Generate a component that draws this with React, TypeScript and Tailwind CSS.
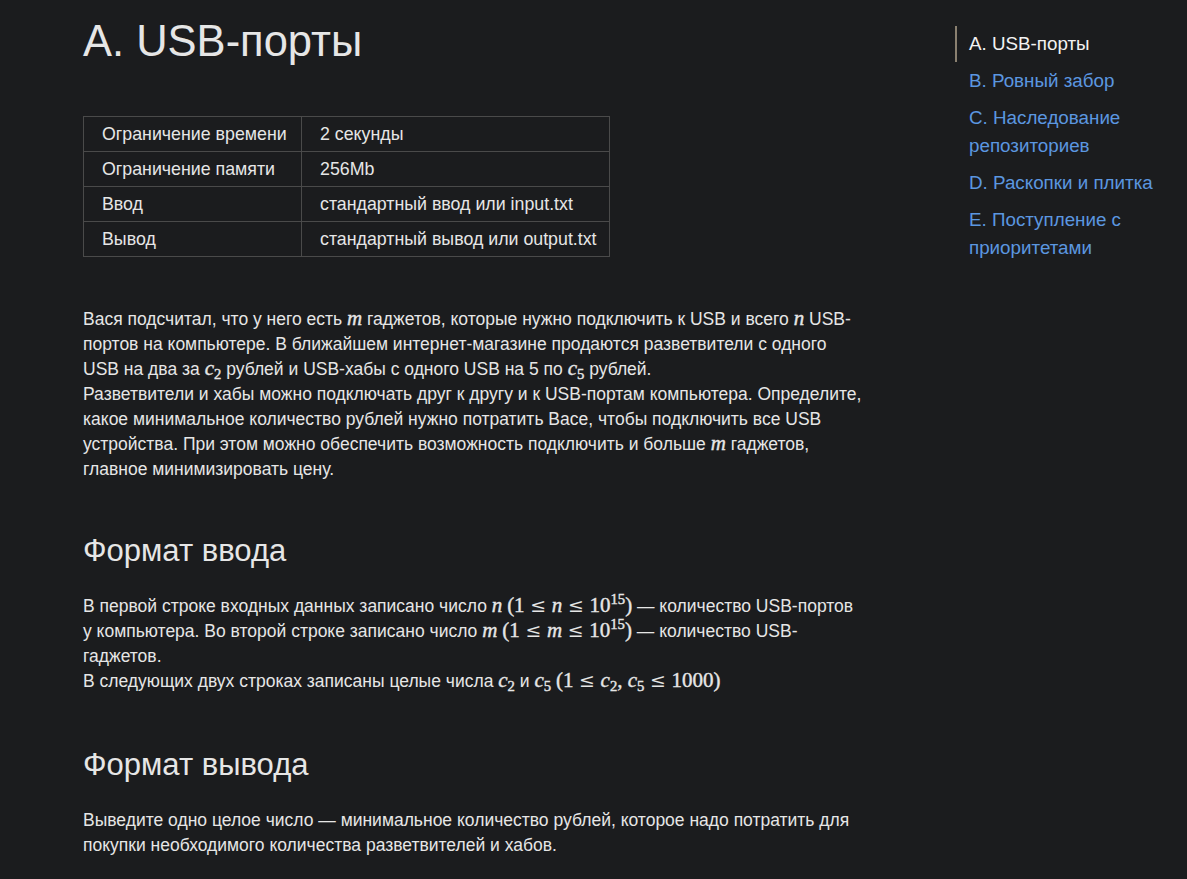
import React from "react";

const M = ({ children }: { children: React.ReactNode }) => (
  <span className="font-['Liberation_Serif',serif] italic text-[1.2em] leading-[0] [-webkit-text-stroke:0.4px]">{children}</span>
);
const N = ({ children }: { children: React.ReactNode }) => (
  <span className="font-['Liberation_Serif',serif] text-[1.2em] leading-[0] [-webkit-text-stroke:0.4px]">{children}</span>
);
const Le = () => (
  <span className="font-['DejaVu_Serif',serif] not-italic text-[0.9em] mx-[0.3em] [-webkit-text-stroke:0px]">≤</span>
);
const Sub = ({ children }: { children: React.ReactNode }) => (
  <span className="not-italic text-[0.7em] relative top-[0.25em] leading-[0]">{children}</span>
);
const Sup = ({ children }: { children: React.ReactNode }) => (
  <span className="text-[0.7em] relative -top-[0.55em] leading-[0]">{children}</span>
);

const limits = [
  ["Ограничение времени", "2 секунды"],
  ["Ограничение памяти", "256Mb"],
  ["Ввод", "стандартный ввод или input.txt"],
  ["Вывод", "стандартный вывод или output.txt"],
];

const nav = [
  "A. USB-порты",
  "B. Ровный забор",
  "C. Наследование репозиториев",
  "D. Раскопки и плитка",
  "E. Поступление с приоритетами",
];

export default function App() {
  return (
    <div className="min-h-[879px] bg-[#1b1c1e] text-[#e6e6e6] font-['Liberation_Sans',Arial,sans-serif] text-[17.5px] leading-[25px]">
      <div className="flex">
        <main className="pl-[83px] pr-[6px] w-[868px] shrink-0 pb-10">
          <h1 className="text-[43.5px] leading-[50px] pt-[16px] font-normal">A. USB-порты</h1>

          {/* limits */}
          <table className="mt-[50px] w-[527px] border-collapse text-[17.8px]">
            <tbody>
              {limits.map(([k, v]) => (
                <tr key={k} className="h-[35px]">
                  <td className="border border-[#4a4a4a] pl-[18px] w-[218px]">{k}</td>
                  <td className="border border-[#4a4a4a] pl-[18px]">{v}</td>
                </tr>
              ))}
            </tbody>
          </table>

          <p className="mt-[50px]">
            Вася подсчитал, что у него есть <M>m</M> гаджетов, которые нужно подключить к USB и всего <M>n</M> USB-портов
            на компьютере. В ближайшем интернет-магазине продаются разветвители с одного USB на два за{" "}
            <M>c<Sub>2</Sub></M> рублей и USB-хабы с одного USB на 5 по <M>c<Sub>5</Sub></M> рублей.
            <br />
            Разветвители и хабы можно подключать друг к другу и к USB-портам компьютера. Определите, какое минимальное
            количество рублей нужно потратить Васе, чтобы подключить все USB устройства. При этом можно обеспечить
            возможность подключить и больше <M>m</M> гаджетов, главное минимизировать цену.
          </p>

          <h2 className="mt-[51px] text-[31px] leading-[36px]">Формат ввода</h2>
          <p className="mt-[25px]">
            В первой строке входных данных записано число <M>n</M>{" "}
            <N>
              (1<Le /><i>n</i><Le />10<Sup>15</Sup>)
            </N>{" "}
            — количество USB-портов у компьютера. Во второй строке записано число <M>m</M>{" "}
            <N>
              (1<Le /><i>m</i><Le />10<Sup>15</Sup>)
            </N>{" "}
            — количество USB-гаджетов.
            <br />
            В следующих двух строках записаны целые числа <M>c<Sub>2</Sub></M> и <M>c<Sub>5</Sub></M>{" "}
            <N>
              (1<Le /><i>c</i>
              <Sub>2</Sub>, <i>c</i>
              <Sub>5</Sub><Le />1000)
            </N>
          </p>

          <h2 className="mt-[53px] text-[31px] leading-[36px]">Формат вывода</h2>
          <p className="mt-[25px]">
            Выведите одно целое число — минимальное количество рублей, которое надо потратить для покупки необходимого
            количества разветвителей и хабов.
          </p>
        </main>

        {/* sidebar */}
        <aside className="ml-[87px] mt-[30px] w-[210px] text-[18.8px]">
          <ul className="flex flex-col gap-[9px]">
            {nav.map((t, i) => (
              <li
                key={t}
                className={
                  i === 0
                    ? "border-l-2 border-[#8a8070] pl-[12px] text-[#f2f2f2] leading-[28px] py-[4px] -my-[4px]"
                    : "border-l-2 border-transparent pl-[12px] text-[#5b97e0] leading-[28px]"
                }
              >
                {t}
              </li>
            ))}
          </ul>
        </aside>
      </div>
    </div>
  );
}
